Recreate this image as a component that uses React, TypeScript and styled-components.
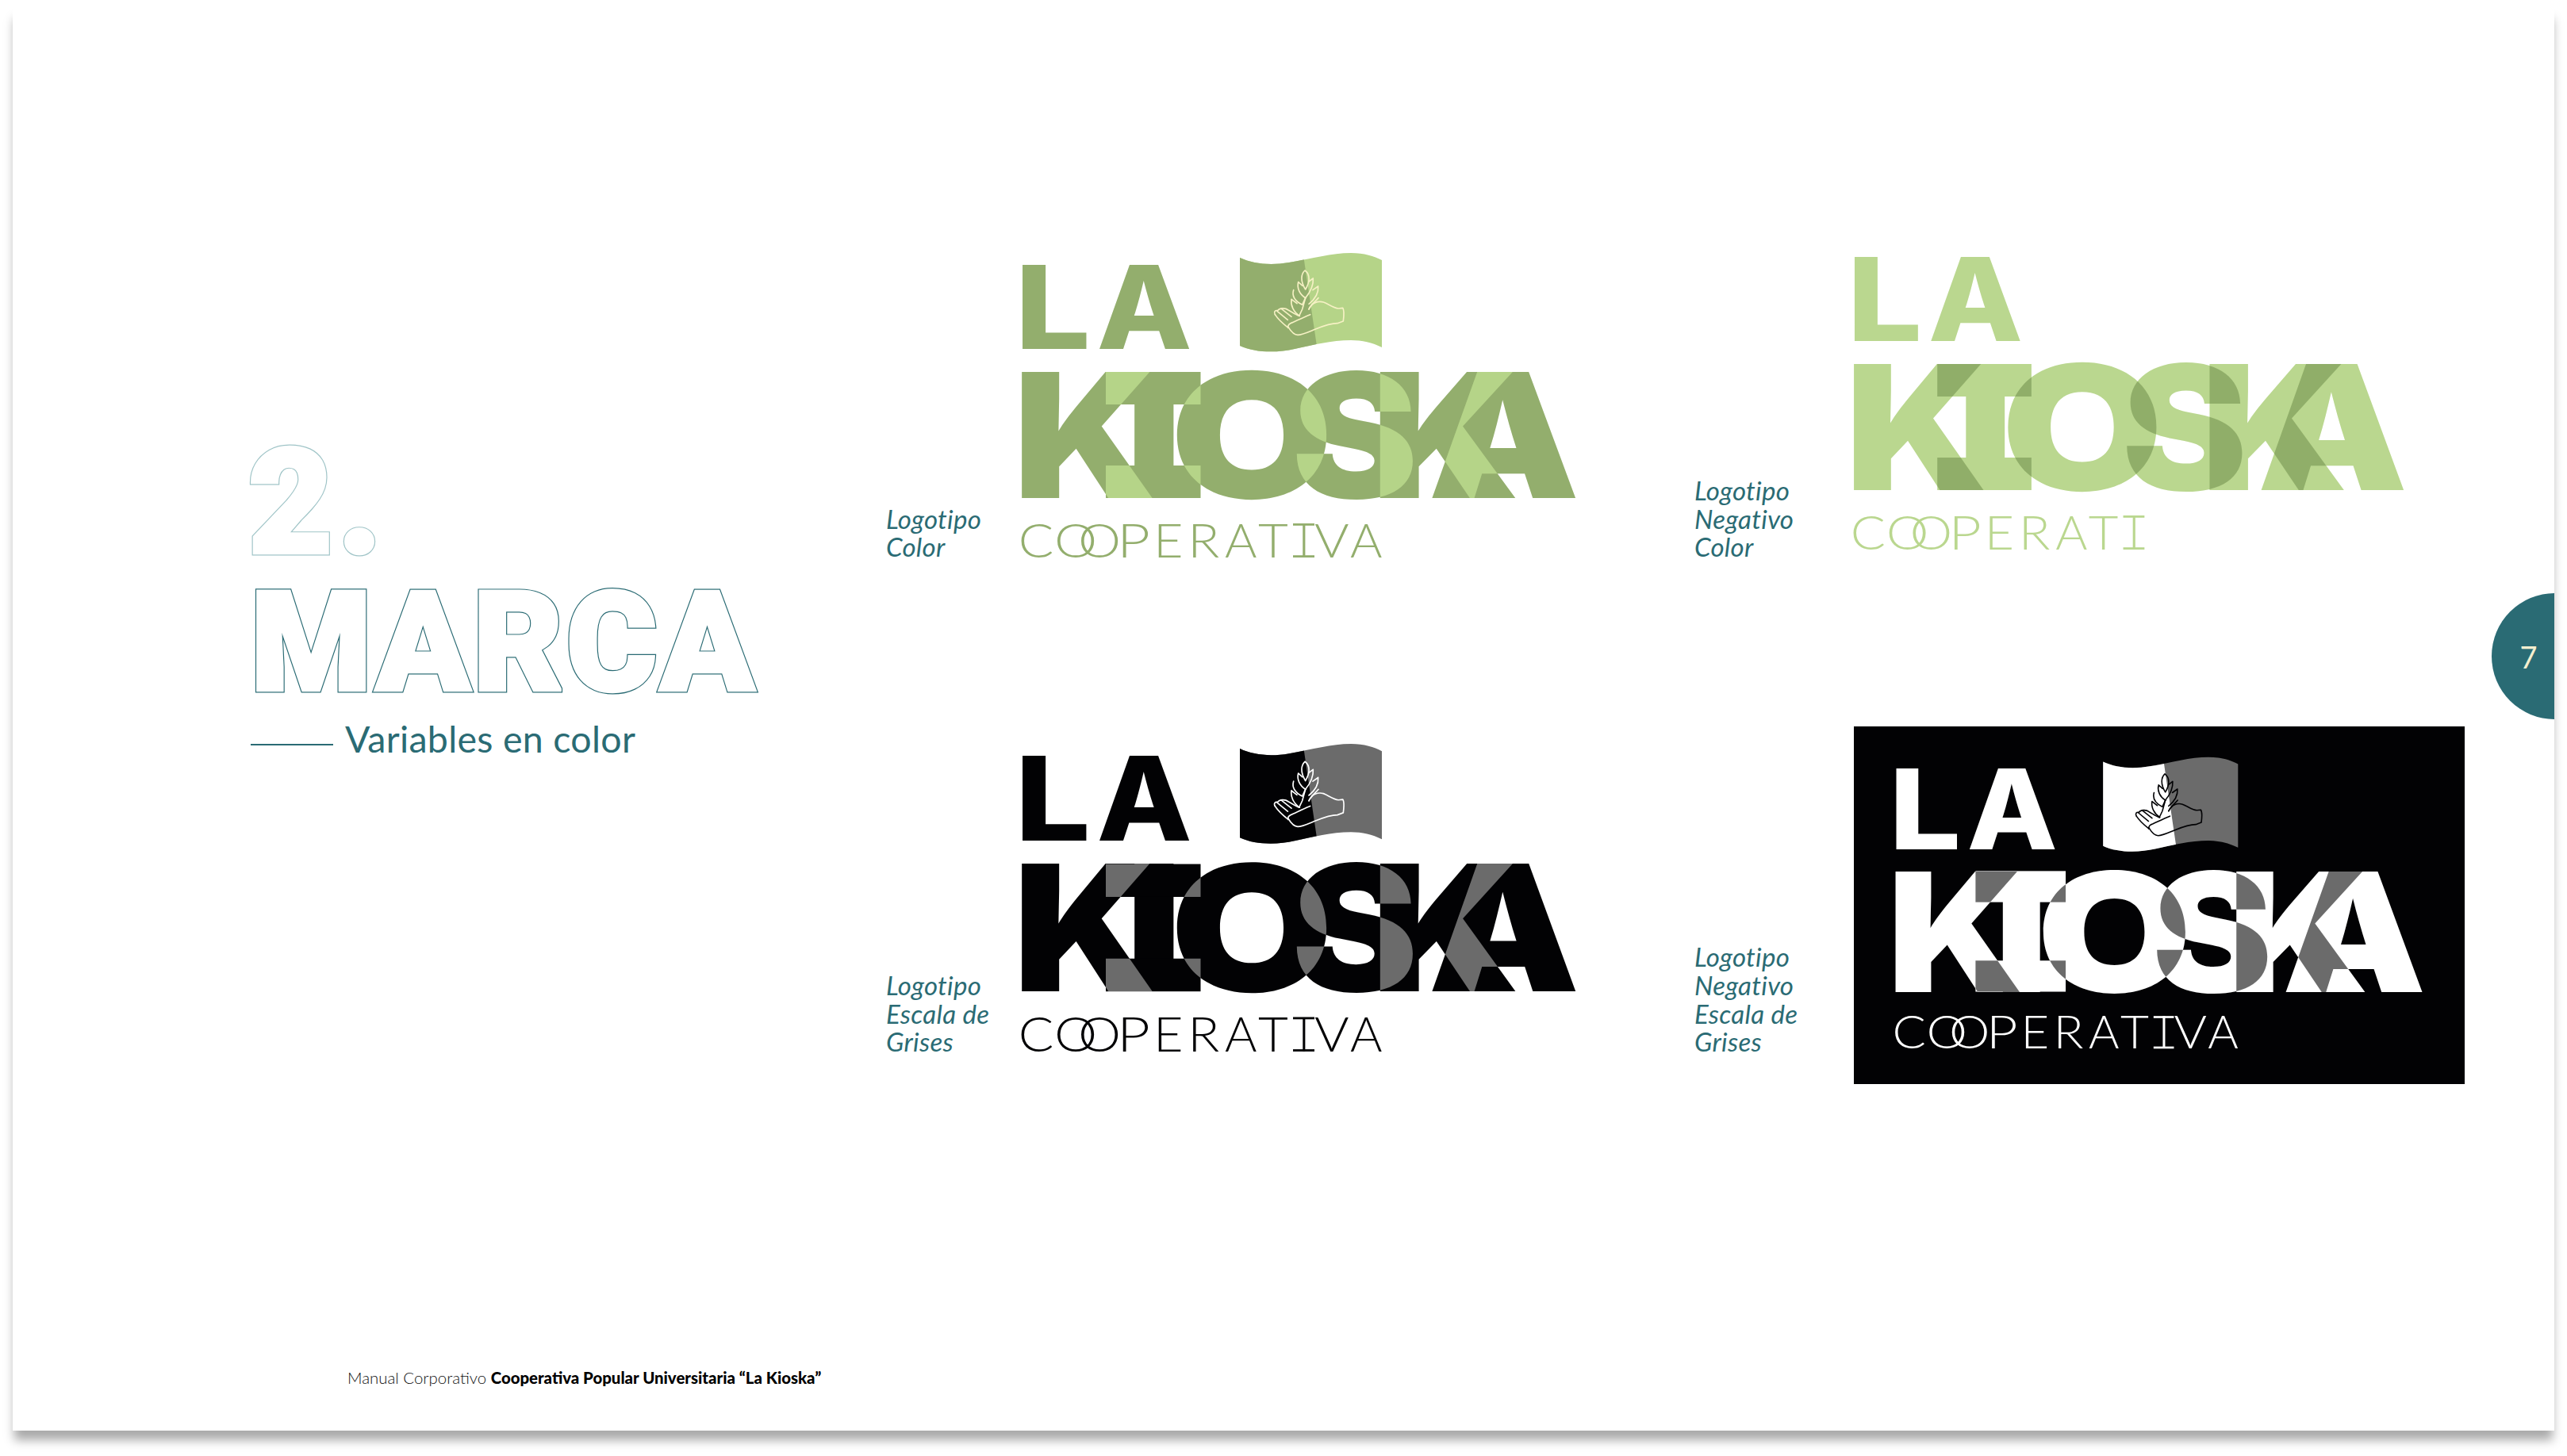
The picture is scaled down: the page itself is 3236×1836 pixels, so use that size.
import styled, { createGlobalStyle } from "styled-components";

const GlobalStyle = createGlobalStyle`
  html, body {
    margin: 0;
    background: #ffffff;
  }
`;

const TEAL = "#2a6b74";

const Page = styled.div`
  box-sizing: border-box;
  height: 1836px;
  padding: 8px 0 0 16px;
  background: #ffffff;
  overflow: hidden;
`;

const Sheet = styled.main`
  position: relative;
  box-sizing: border-box;
  width: 3204px;
  height: 1796px;
  padding: 297px 0 0 300px;
  background: #ffffff;
  box-shadow: 0 14px 12px -2px rgba(0, 0, 0, 0.34);
  overflow: hidden;
`;

const Main = styled.div`
  display: flex;
`;

const Intro = styled.section`
  width: 801px;
  flex: none;
  padding-top: 244px;
`;

// hollow display text: a thick coloured stroke with a slightly thinner white copy on top
const Outlined = styled.div<{ $line: string; $size: number; $gap: number }>`
  position: relative;
  width: fit-content;
  font: 900 ${(p) => p.$size}px/170px Roboto, sans-serif;
  letter-spacing: ${(p) => p.$gap}px;
  color: #ffffff;
  -webkit-text-stroke: 7px ${(p) => p.$line};

  &::after {
    content: attr(data-text);
    position: absolute;
    left: 0;
    top: 0;
    -webkit-text-stroke: 4.6px #ffffff;
  }
`;

const Numeral = styled(Outlined)`
  margin-left: -3px;
`;

const Heading = styled(Outlined)`
  margin: 7px 0 0;
`;

const Subhead = styled.div`
  display: flex;
  align-items: center;
  gap: 15px;
  margin-top: 7px;
  font: 400 46.5px/56px Lato, sans-serif;
  letter-spacing: 0.3px;
  color: ${TEAL};
`;

const Rule = styled.span`
  width: 104px;
  height: 2px;
  margin-top: 16px;
  background: ${TEAL};
`;

const Gallery = styled.section`
  display: grid;
  grid-template-columns: 1019px 1000px;
  grid-template-rows: 406px 451px;
  row-gap: 205px;
`;

const Cell = styled.figure`
  display: flex;
  align-items: flex-end;
  margin: 0;
`;

const Caption = styled.figcaption<{ $width: number; $drop: number }>`
  flex: none;
  box-sizing: border-box;
  width: ${(p) => p.$width}px;
  margin-bottom: ${(p) => p.$drop}px;
  font: italic 400 33px/35.7px Lato, sans-serif;
  letter-spacing: 0.3px;
  color: ${TEAL};
`;

const Panel = styled.div`
  box-sizing: border-box;
  width: 770px;
  height: 451px;
  padding: 35px 0 0 45px;
  background: #020204;
`;

const LogoSvg = styled.svg<{ $w: number; $h: number; $lift: number }>`
  display: block;
  flex: none;
  width: ${(p) => p.$w}px;
  height: ${(p) => p.$h}px;
  margin-bottom: ${(p) => p.$lift}px;
  overflow: visible;
`;

const Glyph = styled.text<{ $fill: string }>`
  font-family: Inter, sans-serif;
  font-weight: 900;
  font-size: 218.7px;
  fill: ${(p) => p.$fill};
`;

const TopGlyph = styled(Glyph)`
  font-weight: 800;
  font-size: 146px;
`;

const ThinGlyph = styled(Glyph)`
  font-family: Lato, sans-serif;
  font-weight: 300;
  font-size: 60px;
`;

const Footer = styled.footer`
  margin: 357px 0 0 122px;
  font: 300 20.4px/26px Lato, sans-serif;
  color: #111111;

  strong {
    font-weight: 900;
    color: #000000;
  }
`;

const PageBadge = styled.div`
  position: absolute;
  top: 740px;
  right: -80px;
  display: flex;
  align-items: center;
  justify-content: center;
  box-sizing: border-box;
  width: 159px;
  height: 159px;
  padding-right: 66px;
  border-radius: 50%;
  background: ${TEAL};
  color: #f4efcf;
  font: 400 38px/1 Lato, sans-serif;
`;

type Palette = { base: string; accent: string; icon: string };

const GREEN: Palette = { base: "#93ae6d", accent: "#b5d488", icon: "#f6f1c4" };
const PALE: Palette = { base: "#bad78f", accent: "#90ae69", icon: "#f6f1c4" };
const GREY: Palette = { base: "#020204", accent: "#6b6b6b", icon: "#ffffff" };
const INVERSE: Palette = { base: "#ffffff", accent: "#6b6b6b", icon: "#020204" };

const BASELINE = 313;

// letters of the big word: origin x and horizontal stretch
const KIOSKA = [
  { key: "k1", ch: "K", x: -3.1, sx: 1.09 },
  { key: "i", ch: "I", x: 138.6, sx: 1.14 },
  { key: "o", ch: "O", x: 194.7, sx: 1.218 },
  { key: "s", ch: "S", x: 347.9, sx: 1.097 },
  { key: "k2", ch: "K", x: 448.2, sx: 1.13 },
  { key: "a", ch: "A", x: 520, sx: 1.102 },
];

const WORD = [
  { ch: "C", x: 3.7, sx: 1.1 },
  { ch: "O", x: 49, sx: 1.14 },
  { ch: "O", x: 79, sx: 1.14 },
  { ch: "P", x: 128.3, sx: 1.2 },
  { ch: "E", x: 174, sx: 1.08 },
  { ch: "R", x: 217.2, sx: 1.1 },
  { ch: "A", x: 264, sx: 1.03 },
  { ch: "T", x: 306, sx: 1.09 },
  { ch: "I", x: 356, sx: 1 },
  { ch: "V", x: 377, sx: 1.11 },
  { ch: "A", x: 422, sx: 1.03 },
];

const BigLetter = ({ index, fill }: { index: number; fill: string }) => {
  const l = KIOSKA[index];
  const text = (
    <Glyph $fill={fill} transform={`translate(${l.x} ${BASELINE}) scale(${l.sx} 1)`}>
      {l.ch}
    </Glyph>
  );
  if (l.ch !== "I") return text;
  return (
    <>
      {text}
      <rect x="114" y="154" width="119.5" height="41" fill={fill} />
      <rect x="114" y="272" width="119.5" height="41" fill={fill} />
    </>
  );
};

const Flag = ({ id, colors }: { id: string; colors: Palette }) => {
  const cloth =
    "M283 10C300 18 322 20 345 16C375 11 398 4 423 4C440 4 452 8 462 13L462 123C450 117 437 114 423 114C398 114 375 120 352 125C330 130 302 130 283 121Z";
  return (
    <g>
      <clipPath id={`${id}-flag`}>
        <polygon points="283 0 362 0 382 135 283 135" />
      </clipPath>
      <path d={cloth} fill={colors.accent} />
      <path d={cloth} fill={colors.base} clipPath={`url(#${id}-flag)`} />
      <g
        transform="translate(320 20) scale(0.3333)"
        fill="none"
        stroke={colors.icon}
        strokeWidth="5"
        strokeLinejoin="round"
        strokeLinecap="round"
      >
        <path d="M135 18C120 32 117 58 137 90C152 65 158 35 135 18Z" />
        <path d="M110 62C104 85 115 108 137 122M110 62L126 76" />
        <path d="M166 48C168 75 155 100 137 122M166 48L150 60" />
        <path d="M92 92C85 115 100 135 125 148L137 122" />
        <path d="M185 78C187 100 175 125 150 145M185 78L165 92" />
        <path d="M84 127C80 150 92 175 115 190M84 127L105 143" />
        <path d="M186 122C175 135 160 145 150 165M137 122L125 165L113 190" />
        <path d="M150 165C160 140 185 132 205 138C225 145 240 160 262 162L278 160C285 170 282 195 280 210L258 218C235 218 205 228 175 240C150 250 125 262 108 262C95 262 80 245 72 232" />
        <path d="M22 185C16 175 22 168 32 170C38 160 60 158 72 168C85 175 100 185 113 190" />
        <path d="M22 185C35 205 55 222 72 235M30 172L70 205M46 163L84 193" />
        <path d="M72 235C68 225 78 218 88 215C110 205 130 195 155 185" />
      </g>
    </g>
  );
};

type LogoProps = {
  id: string;
  colors: Palette;
  w: number;
  h: number;
  lift?: number;
  plain?: boolean;
};

const Logo = ({ id, colors, w, h, lift = 0, plain = false }: LogoProps) => {
  const word = plain ? WORD.slice(0, 9) : WORD;
  const pairs = KIOSKA.slice(1).map((_, i) => i);
  return (
    <LogoSvg viewBox="0 0 712 395" preserveAspectRatio="none" $w={w} $h={h} $lift={lift}>
      <TopGlyph $fill={colors.base} transform="translate(-0.4 125) scale(1.155 1)">
        L
      </TopGlyph>
      <TopGlyph $fill={colors.base} transform="translate(102.5 125) scale(1.07 1)">
        A
      </TopGlyph>
      {!plain && <Flag id={id} colors={colors} />}

      {KIOSKA.map((l, i) => (
        <clipPath id={`${id}-${l.key}`} key={l.key}>
          <BigLetter index={i} fill="#000" />
        </clipPath>
      ))}
      {KIOSKA.map((l, i) => (
        <BigLetter key={l.key} index={i} fill={colors.base} />
      ))}
      {pairs.map((i) => (
        <g key={i} clipPath={`url(#${id}-${KIOSKA[i].key})`}>
          <BigLetter index={i + 1} fill={colors.accent} />
        </g>
      ))}

      {word.map((l) => (
        <ThinGlyph
          key={l.x}
          $fill={colors.base}
          transform={`translate(${l.x} 388) scale(${l.sx} 1)`}
        >
          {l.ch}
        </ThinGlyph>
      ))}
      {word.some((l) => l.ch === "I") && (
        <>
          <rect x="350" y="345" width="27" height="2.8" fill={colors.base} />
          <rect x="350" y="385.2" width="27" height="2.8" fill={colors.base} />
        </>
      )}
    </LogoSvg>
  );
};

export default function App() {
  return (
    <Page>
      <GlobalStyle />
      <Sheet>
        <Main>
          <Intro>
            <Numeral $line="#9fc4c7" $size={184} $gap={6} data-text="2.">
              2.
            </Numeral>
            <Heading as="h1" $line={TEAL} $size={174} $gap={4} data-text="MARCA">
              MARCA
            </Heading>
            <Subhead>
              <Rule />
              Variables en color
            </Subhead>
          </Intro>
          <Gallery>
            <Cell>
              <Caption $width={163} $drop={3}>
                Logotipo
                <br />
                Color
              </Caption>
              <Logo id="color" colors={GREEN} w={712} h={395} lift={1} />
            </Cell>
            <Cell>
              <Caption $width={193} $drop={3}>
                Logotipo
                <br />
                Negativo
                <br />
                Color
              </Caption>
              <Logo id="pale" colors={PALE} w={707} h={395} lift={11} plain />
            </Cell>
            <Cell>
              <Caption $width={163} $drop={35}>
                Logotipo
                <br />
                Escala de
                <br />
                Grises
              </Caption>
              <Logo id="grey" colors={GREY} w={712} h={399} lift={34} />
            </Cell>
            <Cell>
              <Caption $width={201} $drop={35}>
                Logotipo
                <br />
                Negativo
                <br />
                Escala de
                <br />
                Grises
              </Caption>
              <Panel>
                <Logo id="inverse" colors={INVERSE} w={677} h={378} />
              </Panel>
            </Cell>
          </Gallery>
        </Main>
        <Footer>
          Manual Corporativo <strong>Cooperativa Popular Universitaria “La Kioska”</strong>
        </Footer>
        <PageBadge>7</PageBadge>
      </Sheet>
    </Page>
  );
}
